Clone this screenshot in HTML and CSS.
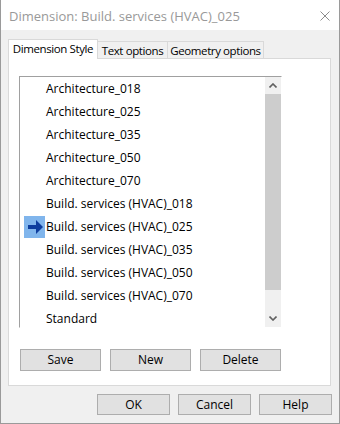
FILE: index.html
```html
<!DOCTYPE html>
<html lang="en">
<head>
  <meta charset="UTF-8">
  <title>Dimension: Build. services (HVAC)_025</title>
  <link rel="stylesheet" href="styles.css">
</head>
<body>
  <div class="window">
    <div class="titlebar">
      <span class="title">Dimension: Build. services (HVAC)_025</span>
      <svg class="close" width="10" height="10" viewBox="0 0 10 10">
        <path d="M0.5 0.5 L9.5 9.5 M9.5 0.5 L0.5 9.5" stroke="#8c8c8c" stroke-width="1" fill="none"/>
      </svg>
    </div>
    <div class="client">
      <div class="tabs">
        <div class="tab active">Dimension Style</div>
        <div class="tab text-tab">Text options</div>
        <div class="tab geo-tab">Geometry options</div>
      </div>
      <div class="panel">
        <div class="listbox">
          <ul class="items">
            <li class="item"><span class="mark"></span>Architecture_018</li>
            <li class="item"><span class="mark"></span>Architecture_025</li>
            <li class="item"><span class="mark"></span>Architecture_035</li>
            <li class="item"><span class="mark"></span>Architecture_050</li>
            <li class="item"><span class="mark"></span>Architecture_070</li>
            <li class="item"><span class="mark"></span>Build. services (HVAC)_018</li>
            <li class="item current">
              <span class="mark">
                <svg width="21" height="22" viewBox="0 0 21 22">
                  <rect x="4" y="9" width="9" height="4" fill="#0d3d9e"/>
                  <polygon points="12,4 19,11 12,18" fill="#0d3d9e"/>
                </svg>
              </span>Build. services (HVAC)_025</li>
            <li class="item"><span class="mark"></span>Build. services (HVAC)_035</li>
            <li class="item"><span class="mark"></span>Build. services (HVAC)_050</li>
            <li class="item"><span class="mark"></span>Build. services (HVAC)_070</li>
            <li class="item"><span class="mark"></span>Standard</li>
          </ul>
          <div class="scrollbar">
            <div class="sb-btn">
              <svg width="8" height="5" viewBox="0 0 8 5"><polyline points="0.5,4.5 4,1 7.5,4.5" stroke="#606060" stroke-width="1.6" fill="none"/></svg>
            </div>
            <div class="sb-thumb"></div>
            <div class="sb-track"></div>
            <div class="sb-btn">
              <svg width="8" height="5" viewBox="0 0 8 5"><polyline points="0.5,0.5 4,4 7.5,0.5" stroke="#606060" stroke-width="1.6" fill="none"/></svg>
            </div>
          </div>
        </div>
        <div class="panel-buttons">
          <button class="btn wide">Save</button>
          <button class="btn wide">New</button>
          <button class="btn wide">Delete</button>
        </div>
      </div>
      <div class="dialog-buttons">
        <button class="btn">OK</button>
        <button class="btn">Cancel</button>
        <button class="btn">Help</button>
      </div>
    </div>
  </div>
</body>
</html>
```

FILE: styles.css
```css
html, body {
  margin: 0;
  padding: 0;
}
body {
  width: 340px;
  height: 424px;
  font-family: 'Open Sans', 'Noto Sans', Arial, sans-serif;
  font-size: 12px;
  color: #000;
}
.window {
  width: 340px;
  height: 424px;
  box-sizing: border-box;
  border: 1px solid #9a9a9a;
  border-top: none;
  background: #f0f0f0;
  display: flex;
  flex-direction: column;
}
.titlebar {
  height: 30px;
  background: #fff;
  display: flex;
  align-items: center;
  justify-content: space-between;
  padding: 1px 9px 0 8px;
  box-sizing: border-box;
}
.title {
  color: #999;
  font-size: 13px;
  white-space: nowrap;
}
.close {
  display: block;
}
.client {
  padding: 9px 8px 0 7px;
  display: flex;
  flex-direction: column;
}
.tabs {
  display: flex;
  align-items: flex-end;
  height: 19px;
  border-bottom: 1px solid #d9d9d9;
}
.tab {
  box-sizing: border-box;
  height: 17px;
  line-height: 17px;
  font-size: 11.5px;
  letter-spacing: -0.4px;
  text-align: center;
  white-space: nowrap;
  border-top: 1px solid #d9d9d9;
  border-right: 1px solid #d9d9d9;
  background: #f0f0f0;
}
.tab.active {
  width: 90px;
  height: 20px;
  line-height: 18px;
  margin-bottom: -1px;
  border-left: 1px solid #d9d9d9;
  background: #fff;
}
.text-tab {
  width: 70px;
}
.geo-tab {
  width: 96px;
}
.panel {
  background: #fff;
  border: 1px solid #d9d9d9;
  border-top: none;
  padding: 17px 0 14px 10px;
}
.listbox {
  width: 263px;
  height: 252px;
  box-sizing: border-box;
  border: 1px solid #fff;
  border-top-color: #a0a0a0;
  border-left-color: #a0a0a0;
  display: flex;
  overflow: hidden;
}
.items {
  list-style: none;
  margin: 0;
  padding: 0;
  flex: 1;
}
.item {
  height: 23px;
  display: flex;
  align-items: center;
  white-space: nowrap;
}
.mark {
  width: 21px;
  height: 22px;
  margin: 0 1px 0 4px;
  flex: none;
}
.current .mark {
  background: #80b5ec;
}
.mark svg {
  display: block;
}
.scrollbar {
  width: 16px;
  flex: none;
  display: flex;
  flex-direction: column;
  background: #f0f0f0;
}
.sb-btn {
  height: 17px;
  display: flex;
  align-items: center;
  justify-content: center;
}
.sb-thumb {
  height: 196px;
  background: #cdcdcd;
}
.sb-track {
  height: 20px;
}
.panel-buttons {
  display: flex;
  gap: 9px;
  margin: 21px 0 0 1px;
}
.btn {
  font-family: inherit;
  font-size: 12px;
  color: #000;
  background: #e1e1e1;
  border: 1px solid #adadad;
  border-radius: 0;
  padding: 0;
  margin: 0;
  width: 73px;
  height: 21px;
  line-height: 18px;
}
.btn.wide {
  width: 81px;
  height: 22px;
}
.dialog-buttons {
  display: flex;
  justify-content: flex-end;
  gap: 8px;
  margin: 8px -1px 0 0;
}
```
